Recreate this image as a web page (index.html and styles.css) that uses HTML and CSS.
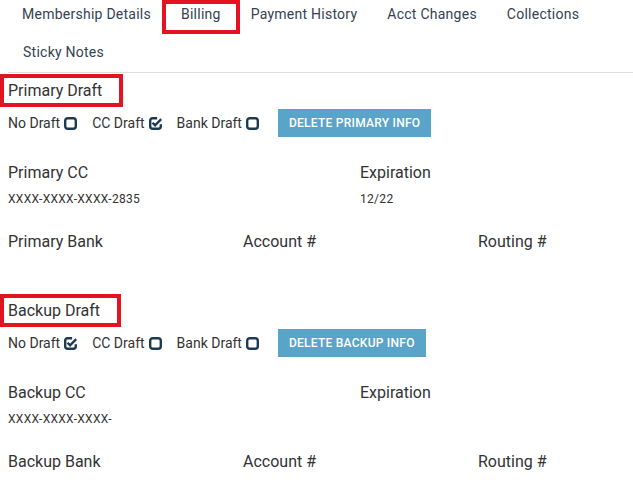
FILE: index.html
```html
<!DOCTYPE html>
<html lang="en">
<head>
  <meta charset="UTF-8" />
  <title>Billing</title>
  <link rel="stylesheet" href="styles.css">
</head>
<body>
  <ul class="tabs">
    <li>Membership Details</li>
    <li class="marked">Billing</li>
    <li>Payment History</li>
    <li>Acct Changes</li>
    <li>Collections</li>
    <li>Sticky Notes</li>
  </ul>

  <div class="draft">
    <h2><span class="marked">Primary Draft</span></h2>
    <div class="draft-options">
      <label>No Draft
        <svg class="box" viewBox="0 0 12 12"><rect x="1.1" y="1.1" width="9.8" height="9.8" rx="2.4"/></svg>
      </label>
      <label>CC Draft
        <svg class="box" viewBox="0 0 12 12"><path d="M7.5 1.1H3.5A2.4 2.4 0 0 0 1.1 3.5V8.5A2.4 2.4 0 0 0 3.5 10.9H8.5A2.4 2.4 0 0 0 10.9 8.5V6.8"/><path d="M3.2 5.3L5.6 7.6L11.3 2"/></svg>
      </label>
      <label>Bank Draft
        <svg class="box" viewBox="0 0 12 12"><rect x="1.1" y="1.1" width="9.8" height="9.8" rx="2.4"/></svg>
      </label>
      <button class="delete-btn">Delete Primary Info</button>
    </div>

    <div class="row two">
      <div class="field"><div class="label">Primary CC</div><div class="value">XXXX-XXXX-XXXX-2835</div></div>
      <div class="field"><div class="label">Expiration</div><div class="value">12/22</div></div>
    </div>
    <div class="row three">
      <div class="field"><div class="label">Primary Bank</div><div class="value"></div></div>
      <div class="field"><div class="label">Account #</div><div class="value"></div></div>
      <div class="field"><div class="label">Routing #</div><div class="value"></div></div>
    </div>
  </div>

  <div class="draft">
    <h2><span class="marked">Backup Draft</span></h2>
    <div class="draft-options">
      <label>No Draft
        <svg class="box" viewBox="0 0 12 12"><path d="M7.5 1.1H3.5A2.4 2.4 0 0 0 1.1 3.5V8.5A2.4 2.4 0 0 0 3.5 10.9H8.5A2.4 2.4 0 0 0 10.9 8.5V6.8"/><path d="M3.2 5.3L5.6 7.6L11.3 2"/></svg>
      </label>
      <label>CC Draft
        <svg class="box" viewBox="0 0 12 12"><rect x="1.1" y="1.1" width="9.8" height="9.8" rx="2.4"/></svg>
      </label>
      <label>Bank Draft
        <svg class="box" viewBox="0 0 12 12"><rect x="1.1" y="1.1" width="9.8" height="9.8" rx="2.4"/></svg>
      </label>
      <button class="delete-btn">Delete Backup Info</button>
    </div>

    <div class="row two">
      <div class="field"><div class="label">Backup CC</div><div class="value">XXXX-XXXX-XXXX-</div></div>
      <div class="field"><div class="label">Expiration</div><div class="value"></div></div>
    </div>
    <div class="row three">
      <div class="field"><div class="label">Backup Bank</div></div>
      <div class="field"><div class="label">Account #</div></div>
      <div class="field"><div class="label">Routing #</div></div>
    </div>
  </div>
</body>
</html>
```

FILE: styles.css
```css
body {
  margin: 0;
  font-family: Roboto, 'Liberation Sans', sans-serif;
  color: #333;
  background: #fff;
  overflow: hidden;
}

.tabs {
  display: flex;
  flex-wrap: wrap;
  row-gap: 10px;
  list-style: none;
  margin: 0 0 0 8px;
  padding: 0 0 6px;
  border-bottom: 1px solid #ddd;
}

.tabs li {
  position: relative;
  padding: 6px 15px;
  font-size: 14px;
  line-height: 16px;
  letter-spacing: 0.25px;
  color: #354250;
}

.tabs li:first-child {
  padding-left: 14px;
}

/* red annotation boxes */
.marked {
  position: relative;
}

.tabs .marked::after {
  content: "";
  position: absolute;
  top: 0;
  bottom: -6px;
  left: -4px;
  right: -4px;
  border: 4px solid #e3141f;
}

h2 .marked::after {
  content: "";
  position: absolute;
  top: -7px;
  bottom: -7px;
  left: -8px;
  right: -21px;
  border: 4px solid #e3141f;
}

.draft {
  padding: 0 8px;
}

.draft + .draft {
  margin-top: 25px;
}

h2 {
  margin: 8px 0 0;
  font-size: 16px;
  line-height: 20px;
  font-weight: 400;
  color: #333;
}

.draft-options {
  display: flex;
  align-items: center;
  height: 28px;
  margin-top: 8px;
  gap: 15px;
}

.draft-options label {
  display: flex;
  align-items: center;
  gap: 4px;
  font-size: 14px;
  color: #333;
}

.box {
  width: 13px;
  height: 13px;
  fill: none;
  stroke: #1c3a51;
  stroke-width: 2.2;
}

.delete-btn {
  margin-left: 4px;
  height: 28px;
  padding: 0 11px;
  border: none;
  background-color: #5ba4c9;
  color: #fff;
  font-family: Roboto, 'Liberation Sans', sans-serif;
  font-size: 12px;
  font-weight: 500;
  letter-spacing: 0.25px;
  text-transform: uppercase;
}

.row {
  display: grid;
  margin-top: 25px;
}

.row.two {
  margin-top: 26px;
  grid-template-columns: 352px 1fr;
}

.row.three {
  grid-template-columns: 235px 235px 1fr;
}

.label {
  font-size: 16px;
  line-height: 20px;
}

.value {
  margin-top: 8px;
  font-size: 12px;
  line-height: 16px;
  letter-spacing: 0.3px;
  min-height: 16px;
}
```
